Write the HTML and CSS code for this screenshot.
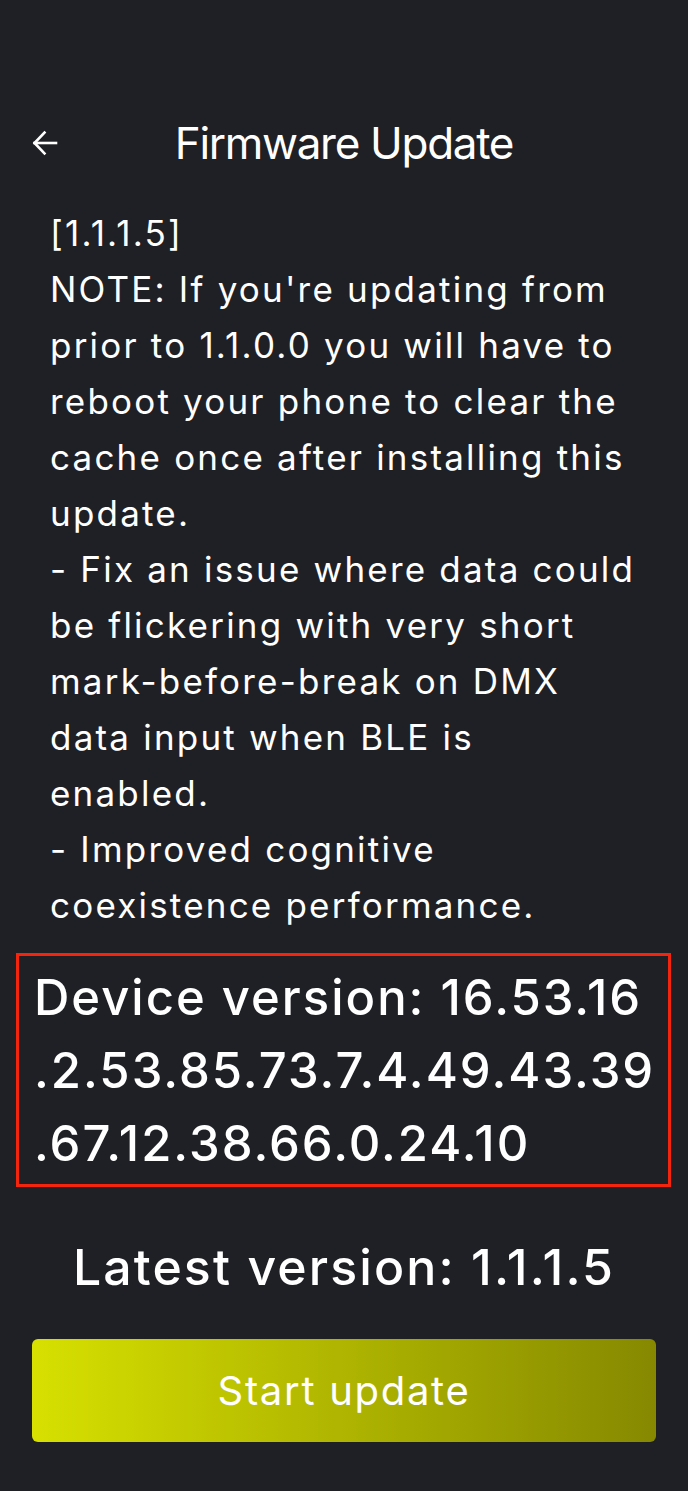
FILE: index.html
```html
<!DOCTYPE html>
<html>
    <head>
        <title>Firmware Update</title>
        <link rel="stylesheet" href="styles.css">
    </head>
    <body>
        <div class="page">
            <div class="top-bar">
                <div class="back-btn">
                    <svg width="26" height="26" viewBox="0 0 26 26" fill="none" stroke="#ffffff" stroke-width="2.6" stroke-linecap="square">
                        <path d="M2.5 13 H24"/>
                        <path d="M12.5 2.5 L2.5 13 L12.5 23.5" stroke-linejoin="miter"/>
                    </svg>
                </div>
                <h1 class="title">Firmware Update</h1>
                <div></div>
            </div>
            <div class="notes">[1.1.1.5]<br>NOTE: If you're updating from prior to 1.1.0.0 you will have to reboot your phone to clear the cache once after installing this update.<br>- Fix an issue where data could be flickering with very short mark-before-break on DMX data input when BLE is enabled.<br>- Improved cognitive coexistence performance.</div>
            <div class="device-box">
                <div class="device-text">Device version: 16.53.16<br>.2.53.85.73.7.4.49.43.39<br>.67.12.38.66.0.24.10</div>
            </div>
            <div class="latest">Latest version: 1.1.1.5</div>
            <div class="update-btn">Start update</div>
        </div>
    </body>
</html>
```

FILE: styles.css
```css
html, body {
    margin: 0;
    padding: 0;
    background-color: #1f2026;
    color: #ffffff;
    font-family: Inter, "Noto Sans", sans-serif;
}
.page {
    width: 688px;
    min-height: 1491px;
    padding-top: 98px;
    box-sizing: border-box;
}
.top-bar {
    display: grid;
    grid-template-columns: 1fr auto 1fr;
    align-items: center;
    height: 90px;
}
.back-btn {
    padding-left: 32px;
    display: flex;
    align-items: center;
}
.title {
    margin: 0;
    font-size: 44px;
    font-weight: 400;
    letter-spacing: -1.3px;
}
.notes {
    margin-top: 17px;
    padding: 0 48px 0 50px;
    font-size: 35px;
    line-height: 56px;
    letter-spacing: 2.2px;
}
.device-box {
    margin: 20px 17px 0 16px;
    border: 3px solid #f3250d;
    padding: 5px 8px 4px 15px;
}
.device-text {
    font-size: 49px;
    line-height: 73px;
    font-weight: 500;
    letter-spacing: 2px;
}
.latest {
    margin-top: 45px;
    text-align: center;
    font-size: 50px;
    font-weight: 500;
    line-height: 70px;
    letter-spacing: 2.1px;
}
.update-btn {
    margin: 37px 32px 0 32px;
    height: 103px;
    border-radius: 6px;
    background: linear-gradient(to right, #d7e000, #868900);
    display: flex;
    align-items: center;
    justify-content: center;
    font-size: 40px;
    letter-spacing: 1.7px;
}
```
